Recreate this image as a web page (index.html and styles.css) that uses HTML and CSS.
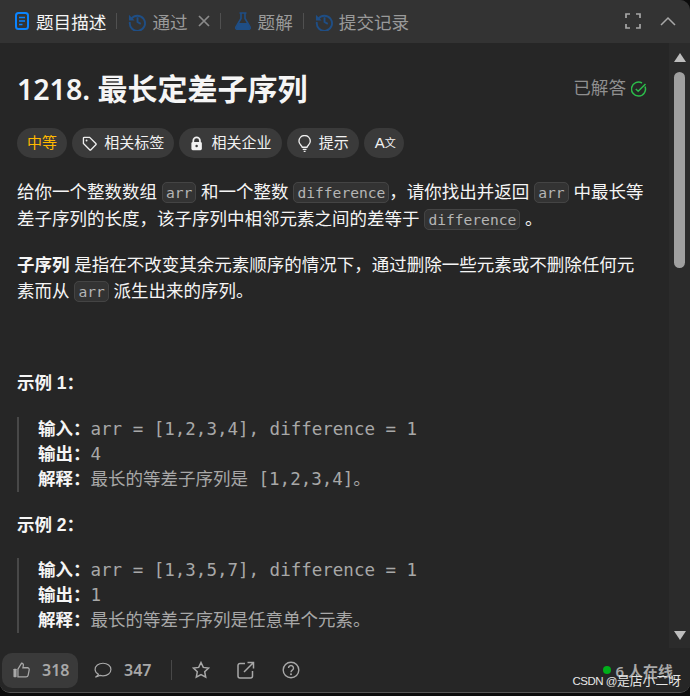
FILE: index.html
```html
<!DOCTYPE html>
<html lang="zh">
<head>
<meta charset="utf-8">
<title>1218. 最长定差子序列</title>
<link rel="stylesheet" href="styles.css">
</head>
<body>
<div class="panel">
  <header class="tabs">
    <div class="tab active">
      <svg class="ticon" viewBox="0 0 14 18"><rect x="1" y="1" width="12" height="16" rx="2.5" fill="none" stroke="#0a84ff" stroke-width="2"/><path d="M4 5.5h6M4 9h6M4 12.5h3.5" stroke="#0a84ff" stroke-width="1.6"/></svg>
      <span>题目描述</span>
    </div>
    <i class="sep"></i>
    <div class="tab">
      <svg class="ticon hist" viewBox="0 0 20 20"><path d="M3.2 7.5A8 8 0 1 1 2 10.5" fill="none" stroke="#1f4e85" stroke-width="2"/><path d="M1 3v6h6z" fill="#1f4e85"/><path d="M10 5.5V10.5l3.5 2" fill="none" stroke="#1f4e85" stroke-width="2"/></svg>
      <span>通过</span>
      <svg class="close" viewBox="0 0 12 12"><path d="M1 1l10 10M11 1L1 11" stroke="#8a8a8a" stroke-width="1.7"/></svg>
    </div>
    <i class="sep"></i>
    <div class="tab">
      <svg class="ticon flask" viewBox="0 0 16 18"><path d="M4.5 1h7M6 1.5v5L1 15a1.6 1.6 0 0 0 1.4 2.4h11.2A1.6 1.6 0 0 0 15 15L10 6.500v-5" fill="none" stroke="#1f4e85" stroke-width="1.6"/><path d="M3.500 11h9l2.500 5-1 1.500H2l-1-1.500z" fill="#1f4e85"/></svg>
      <span>题解</span>
    </div>
    <i class="sep"></i>
    <div class="tab">
      <svg class="ticon hist" viewBox="0 0 20 20"><path d="M3.2 7.5A8 8 0 1 1 2 10.5" fill="none" stroke="#1f4e85" stroke-width="2"/><path d="M1 3v6h6z" fill="#1f4e85"/><path d="M10 5.500V10.500l3.500 2" fill="none" stroke="#1f4e85" stroke-width="2"/></svg>
      <span>提交记录</span>
    </div>
    <div class="tab-tools">
      <svg class="tool" viewBox="0 0 16 16"><path d="M1 5V1h4M11 1h4v4M15 11v4h-4M5 15H1v-4" fill="none" stroke="#a8a8a8" stroke-width="1.700"/></svg>
      <svg class="tool chev" viewBox="0 0 16 10"><path d="M1 9l7-7 7 7" fill="none" stroke="#a8a8a8" stroke-width="1.500"/></svg>
    </div>
  </header>

  <div class="main">
    <article class="content">
      <div class="title-row">
        <h1><span class="num">1218.</span> 最长定差子序列</h1>
        <div class="solved">已解答
          <svg class="check" viewBox="0 0 16 16"><path d="M14 5.500A7 7 0 1 1 11 2" fill="none" stroke="#2cbb4a" stroke-width="1.500"/><path d="M4.800 8l2.400 2.200L14.500 3" fill="none" stroke="#2cbb4a" stroke-width="1.500"/></svg>
        </div>
      </div>

      <div class="pills">
        <span class="pill medium">中等</span>
        <span class="pill"><svg class="picon" viewBox="0 0 16 16"><path d="M1.500 2.500a1 1 0 0 1 1-1H8l6.500 6.500a1 1 0 0 1 0 1.400L9.400 14.500a1 1 0 0 1-1.400 0L1.500 8z" fill="none" stroke="#eee" stroke-width="1.400"/><circle cx="4.800" cy="4.800" r="1" fill="#eee"/></svg>相关标签</span>
        <span class="pill"><svg class="picon" viewBox="0 0 16 16"><path d="M4.500 7V5a3.500 3.500 0 0 1 7 0v2" fill="none" stroke="#f2f2f2" stroke-width="1.800"/><rect x="2.500" y="6.500" width="11" height="8.500" rx="1.500" fill="#f2f2f2"/><circle cx="8" cy="10.700" r="1.300" fill="#3a3a3a"/></svg>相关企业</span>
        <span class="pill"><svg class="picon" viewBox="0 0 16 18"><path d="M5.500 13C5 11 2 9.800 2 6.500a6 6 0 0 1 12 0c0 3.300-3 4.500-3.500 6.500z" fill="none" stroke="#eee" stroke-width="1.400"/><path d="M6 15.300h4M7 17.300h2" stroke="#eee" stroke-width="1.400"/></svg>提示</span>
        <span class="pill lang">A<small>文</small></span>
      </div>

      <p class="desc">给你一个整数数组 <code>arr</code> 和一个整数 <code>difference</code>，请你找出并返回 <code>arr</code> 中最长等差子序列的长度，该子序列中相邻元素之间的差等于 <code>difference</code> 。</p>
      <p class="desc second"><strong>子序列</strong> 是指在不改变其余元素顺序的情况下，通过删除一些元素或不删除任何元素而从 <code>arr</code> 派生出来的序列。</p>

      <p class="ex-title first"><strong>示例 1：</strong></p>
      <pre class="example"><strong>输入：</strong>arr = [1,2,3,4], difference = 1
<strong>输出：</strong>4
<strong>解释：</strong>最长的等差子序列是 [1,2,3,4]。</pre>

      <p class="ex-title"><strong>示例 2：</strong></p>
      <pre class="example"><strong>输入：</strong>arr = [1,3,5,7], difference = 1
<strong>输出：</strong>1
<strong>解释：</strong>最长的等差子序列是任意单个元素。</pre>
    </article>

    <div class="scrollbar">
      <i class="arrow up"></i>
      <div class="track"><div class="thumb"></div></div>
      <i class="arrow down"></i>
    </div>
  </div>

  <footer class="footer">
    <div class="like">
      <svg class="ficon" viewBox="0 0 20 18"><rect x="0.500" y="7.500" width="3.500" height="9.500" rx="0.800" fill="#a8a8a8"/><path d="M5.500 8L9.500 1.500c1.500 0 2.300 1 2 2.500L11 6.500h5a2 2 0 0 1 2 2.400l-1.200 6a2.300 2.300 0 0 1-2.300 1.800H5.500z" fill="none" stroke="#a8a8a8" stroke-width="1.400"/></svg>
      <span>318</span>
    </div>
    <div class="comment">
      <svg class="ficon" viewBox="0 0 20 18"><path d="M5 13.700C2.500 12.500 1.200 10.700 1.200 8.500c0-4 3.800-7 8.800-7s8.800 3 8.800 7-3.800 7-8.800 7c-1.200 0-2.300-.2-3.300-.5L1.500 17c1.800-1 3-2 3.500-3.300z" fill="none" stroke="#a8a8a8" stroke-width="1.300"/></svg>
      <span>347</span>
    </div>
    <i class="fsep"></i>
    <svg class="ficon act" viewBox="0 0 18 18"><path d="M9 1.500l2.300 4.900 5.300.7-3.900 3.700 1 5.300L9 13.500l-4.700 2.600 1-5.300L1.400 7.100l5.300-.7z" fill="none" stroke="#a8a8a8" stroke-width="1.500"/></svg>
    <svg class="ficon act" viewBox="0 0 18 18"><path d="M8 2.500H3a2 2 0 0 0-2 2V15a2 2 0 0 0 2 2h10.500a2 2 0 0 0 2-2v-5" fill="none" stroke="#a8a8a8" stroke-width="1.500"/><path d="M7 11L16 2M10.500 1.500h6v6" fill="none" stroke="#a8a8a8" stroke-width="1.500"/></svg>
    <svg class="ficon act" viewBox="0 0 18 18"><circle cx="9" cy="9" r="7.800" fill="none" stroke="#a8a8a8" stroke-width="1.400"/><path d="M6.500 7a2.500 2.500 0 1 1 3.800 2.200C9.400 9.800 9 10.200 9 11.200" fill="none" stroke="#a8a8a8" stroke-width="1.400"/><circle cx="9" cy="13.300" r="1" fill="#a8a8a8"/></svg>
    <div class="online"><i class="dot"></i><span>6 人在线</span></div>
  </footer>
  <div class="watermark"><span class="wm-latin">CSDN @</span>是店小二呀</div>
</div>
</body>
</html>
```
FILE: styles.css
```css
* { box-sizing: border-box; }
html, body { margin: 0; height: 100%; background: #0c0c0c; }
body {
  font-family: "Liberation Sans", "Noto Sans CJK SC", sans-serif;
  color: #eff1f6;
  overflow: hidden;
}
.panel {
  position: relative;
  width: 690px;
  height: 693px;
  display: flex;
  flex-direction: column;
  background: #262626;
  border-bottom: 1px solid #555;
  border-radius: 0 10px 10px 10px;
  overflow: hidden;
}
.tabs {
  flex: none;
  height: 43px;
  display: flex;
  align-items: center;
  padding: 0 0 1px 15px;
  background: #333333;
  font-size: 17.6px;
}
.tab {
  display: flex;
  align-items: center;
  gap: 5px;
  color: #9a9a9a;
}
.tab.active { color: #f5f5f5; gap: 7px; }
.ticon { flex: none; }
.tab.active .ticon { width: 14px; height: 18px; }
.hist { width: 19px; height: 19px; }
.flask { width: 16px; height: 18px; margin: 0 2px 0 3px; }
.close { width: 12px; height: 12px; margin-left: 5px; }
.sep { width: 1px; height: 16px; background: #505050; margin: 0 11px 0 10px; }
.tab-tools {
  margin-left: auto;
  display: flex;
  align-items: center;
  gap: 19px;
  padding-right: 14px;
}
.tool { width: 16px; height: 16px; }
.chev { width: 16px; height: 10px; }
.main {
  flex: 1;
  min-height: 0;
  display: flex;
}
.content {
  flex: 1;
  min-width: 0;
  padding: 27px 22px 0 17px;
  overflow: hidden;
  font-size: 17.5px;
  line-height: 26.25px;
}
.title-row {
  display: flex;
  align-items: center;
  justify-content: space-between;
  margin-right: -6px;
}
h1 {
  margin: 0;
  font-size: 30px;
  line-height: 38px;
  font-weight: 700;
  color: #f5f5f5;
}
h1 .num { font-weight: 600; font-family: "Noto Sans", sans-serif; font-size: 28.5px; margin-right: -1px; }
.solved {
  display: flex;
  align-items: center;
  gap: 5px;
  margin-top: -2px;
  font-size: 17.6px;
  color: #8f8f8f;
  padding-right: 6px;
}
.check { width: 16px; height: 16px; }
.pills {
  display: flex;
  gap: 5px;
  margin-top: 19px;
}
.pill {
  height: 30px;
  padding: 0 10px;
  display: inline-flex;
  align-items: center;
  gap: 7px;
  border-radius: 15px;
  background: #3a3a3a;
  font-size: 15px;
  color: #f2f2f2;
}
.pill.medium { color: #ffb800; padding: 0 10px; }
.pill.lang { padding: 0 8px 0 11px; gap: 0; }
.pill.lang small { font-size: 11px; }
.picon { width: 15.250px; height: 17px; flex: none; }
.desc { margin: 21px 0 0; color: #f5f5f5; }
.desc.second { margin-top: 18px; }
code {
  font-family: "DejaVu Sans Mono", monospace;
  font-size: 14.6px;
  padding: 1px 3px;
  color: #b5b5b5;
  background: #333;
  border: 1px solid #444;
  border-radius: 5px;
}
strong { font-weight: 700; color: #f5f5f5; }
.ex-title { margin: 0; font-size: 17.5px; line-height: 25px; }
.ex-title.first { margin-top: 66px; }
.example {
  margin: 20.500px 0 21px;
  padding-left: 19px;
  border-left: 2px solid #484848;
  font-family: "DejaVu Sans Mono", "Noto Sans CJK SC", monospace;
  font-size: 17.5px;
  line-height: 25px;
  color: #a8a8a8;
  white-space: pre-wrap;
}
.example strong { font-family: "Liberation Sans", "Noto Sans CJK SC", sans-serif; }
.scrollbar {
  flex: none;
  width: 21px;
  display: flex;
  flex-direction: column;
  align-items: center;
  background: #2b2b2b;
  padding-top: 10px;
}
.track { flex: 1; width: 11px; padding-top: 10px; }
.thumb { width: 11px; height: 196px; border-radius: 6px; background: #a0a0a0; }
.arrow { width: 0; height: 0; border-left: 6.5px solid transparent; border-right: 6.5px solid transparent; }
.arrow.up { border-bottom: 9px solid #bdbdbd; }
.arrow.down { border-top: 9px solid #bdbdbd; margin-bottom: 8px; }
.footer {
  flex: none;
  height: 44px;
  display: flex;
  align-items: center;
  padding: 0 0 0 2px;
  background: #262626;
  font-family: "Noto Sans", "Noto Sans CJK SC", sans-serif;
  font-size: 16px;
  font-weight: 600;
  color: #a8a8a8;
}
.like {
  display: flex;
  align-items: center;
  gap: 11px;
  width: 76px;
  height: 35px;
  padding: 0 11px;
  border-radius: 10px;
  background: #3a3a3a;
}
.comment {
  display: flex;
  align-items: center;
  gap: 12px;
  margin-left: 16px;
}
.ficon { width: 18px; height: 18px; flex: none; }
.fsep { width: 1px; height: 20px; background: #484848; margin: 0 20px; }
.act { margin-right: 27px; }
.online {
  margin-left: auto;
  display: flex;
  align-items: center;
  gap: 5px;
  padding-right: 17px;
  font-size: 15px;
}
.dot { width: 8px; height: 8px; border-radius: 50%; background: #00af1a; }
.watermark {
  position: absolute;
  right: 9px;
  bottom: 2px;
  font-size: 12.800px;
  line-height: 18px;
  color: #e6e6e6;
  white-space: nowrap;
}
.wm-latin { font-size: 11.500px; letter-spacing: -0.5px; }
```
